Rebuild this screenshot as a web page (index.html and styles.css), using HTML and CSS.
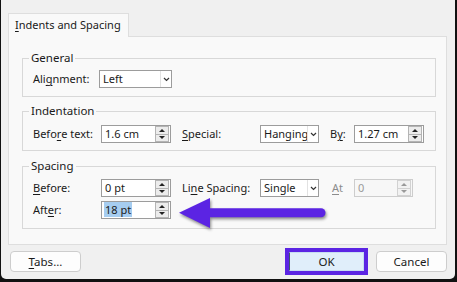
FILE: index.html
```html
<!DOCTYPE html>
<html lang="en">
<head>
    <meta charset="UTF-8">
    <meta name="viewport" content="width=device-width, initial-scale=1.0">
    <title>Paragraph</title>
    <link rel="stylesheet" href="styles.css">
</head>
<body>
    <div class="dialog">
        <div class="tabs">
            <div class="tab"><u>I</u>ndents and Spacing</div>
        </div>
        <div class="panel">
            <fieldset class="group group-general">
                <legend>General</legend>
                <div class="grid">
                    <label class="lbl">Ali<u>g</u>nment:</label>
                    <div class="select select-align">
                        <span class="val">Left</span>
                        <span class="drop"><svg width="7" height="5" viewBox="0 0 7 5"><path d="M1 1 L3.5 3.5 L6 1" fill="none" stroke="#333" stroke-width="1.2"/></svg></span>
                    </div>
                </div>
            </fieldset>

            <fieldset class="group group-indent">
                <legend>Indentation</legend>
                <div class="grid">
                    <label class="lbl">Befo<u>r</u>e text:</label>
                    <div class="spin">
                        <span class="val">1.6 cm</span>
                        <span class="spinbtns"><span class="sb"><i class="up"></i></span><span class="sb"><i class="down"></i></span></span>
                    </div>
                    <label class="lbl"><u>S</u>pecial:</label>
                    <div class="select">
                        <span class="val">Hanging</span>
                        <span class="drop"><svg width="7" height="5" viewBox="0 0 7 5"><path d="M1 1 L3.5 3.5 L6 1" fill="none" stroke="#333" stroke-width="1.2"/></svg></span>
                    </div>
                    <label class="lbl">B<u>y</u>:</label>
                    <div class="spin">
                        <span class="val">1.27 cm</span>
                        <span class="spinbtns"><span class="sb"><i class="up"></i></span><span class="sb"><i class="down"></i></span></span>
                    </div>
                </div>
            </fieldset>

            <fieldset class="group group-spacing">
                <legend>Spacing</legend>
                <div class="grid">
                    <label class="lbl"><u>B</u>efore:</label>
                    <div class="spin">
                        <span class="val">0 pt</span>
                        <span class="spinbtns"><span class="sb"><i class="up"></i></span><span class="sb"><i class="down"></i></span></span>
                    </div>
                    <label class="lbl">Li<u>n</u>e Spacing:</label>
                    <div class="select">
                        <span class="val">Single</span>
                        <span class="drop"><svg width="7" height="5" viewBox="0 0 7 5"><path d="M1 1 L3.5 3.5 L6 1" fill="none" stroke="#333" stroke-width="1.2"/></svg></span>
                    </div>
                    <label class="lbl lbl-disabled"><u>A</u>t</label>
                    <div class="spin spin-disabled">
                        <span class="val">0</span>
                        <span class="spinbtns"><span class="sb"><i class="up"></i></span><span class="sb"><i class="down"></i></span></span>
                    </div>

                    <label class="lbl">Aft<u>e</u>r:</label>
                    <div class="spin">
                        <span class="val"><span class="selected">18 pt</span></span>
                        <span class="spinbtns"><span class="sb"><i class="up"></i></span><span class="sb"><i class="down"></i></span></span>
                    </div>
                </div>
            </fieldset>
        </div>

        <div class="footer">
            <button class="btn"><u>T</u>abs...</button>
            <div class="ok-wrap">
                <button class="btn btn-ok">OK</button>
            </div>
            <button class="btn">Cancel</button>
        </div>
    </div>

    <!-- callout arrow pointing at the After field -->
    <svg class="callout" width="457" height="282" viewBox="0 0 457 282">
        <line x1="206" y1="212.8" x2="321" y2="212.8" stroke="#5b24e3" stroke-width="9" stroke-linecap="round"/>
        <polygon points="179,212.8 210,198 210,228" fill="#5b24e3"/>
    </svg>
</body>
</html>
```

FILE: styles.css
```css
body {
    margin: 0;
    width: 457px;
    height: 282px;
    background-color: #111;
    font-family: "Noto Sans", "Open Sans", sans-serif;
    font-size: 11px;
    color: #1a1a1a;
    position: relative;
    overflow: hidden;
}
u {
    text-decoration-thickness: 1px;
    text-underline-offset: 2px;
}
.dialog {
    box-sizing: border-box;
    margin: 0 2px 0 1px;
    height: 279px;
    padding: 13px 8px 0 7px;
    background-color: #f0f0f0;
    border-radius: 0 0 5px 5px;
}
.tabs {
    display: flex;
    height: 24px;
}
.tab {
    position: relative;
    z-index: 1;
    box-sizing: border-box;
    width: 121px;
    height: 24px;
    padding: 0 6px;
    line-height: 22px;
    white-space: nowrap;
    background-color: #f9f9f9;
    border: 1px solid #dedede;
    border-bottom: none;
    font-size: 11px;
}
.panel {
    box-sizing: border-box;
    width: 439px;
    height: 209px;
    margin-top: -1px;
    padding: 14px 10px 0 13px;
    background-color: #f9f9f9;
    border: 1px solid #dedede;
}
.group {
    margin: 0;
    padding: 5px 0 8px 10px;
    border: 1px solid #d8d8d8;
    min-width: 0;
}
.group legend {
    margin-left: -4px;
    padding: 0 2px;
    line-height: 14px;
    font-size: 11.5px;
}
.group-indent {
    margin-top: 7px;
    padding-top: 7px;
    padding-bottom: 7px;
}
.group-spacing {
    margin-top: 8px;
    padding-top: 6px;
    padding-bottom: 9px;
}
.grid {
    display: grid;
    grid-template-columns: 68px 81px 78px 70px 24px 70px;
    grid-auto-rows: 18px;
    row-gap: 4px;
    align-items: center;
}
.lbl {
    white-space: nowrap;
    line-height: 18px;
}
.lbl-disabled {
    color: #8c8c8c;
    padding-left: 2px;
}
.select {
    box-sizing: border-box;
    display: flex;
    width: 59px;
    height: 18px;
    background-color: #fff;
    border: 1px solid #9c9c9c;
}
.select-align {
    width: 73px;
    margin-left: -2px;
}
.select .val {
    flex: 1;
    padding-left: 3px;
    line-height: 16px;
    white-space: nowrap;
    overflow: hidden;
}
.drop {
    width: 10px;
    display: flex;
    align-items: center;
    justify-content: center;
    border-left: 1px solid #e2e2e2;
}
.spin {
    box-sizing: border-box;
    display: flex;
    width: 70px;
    height: 18px;
    background-color: #fff;
    border: 1px solid #9c9c9c;
}
.spin .val {
    flex: 1;
    padding-left: 3px;
    line-height: 16px;
    white-space: nowrap;
}
.selected {
    background-color: #a6cdf0;
    padding: 0 1px;
    margin-left: -1px;
}
.spinbtns {
    box-sizing: border-box;
    width: 14px;
    margin: 0 1px 0 0;
    display: flex;
    flex-direction: column;
    border: 1px solid #b4b4b4;
    background-color: #ececec;
}
.sb {
    flex: 1;
    display: flex;
    align-items: center;
    justify-content: center;
}
.sb + .sb {
    border-top: 1px solid #b4b4b4;
}
.up {
    width: 0;
    height: 0;
    border-left: 3px solid transparent;
    border-right: 3px solid transparent;
    border-bottom: 3px solid #222;
}
.down {
    width: 0;
    height: 0;
    border-left: 3px solid transparent;
    border-right: 3px solid transparent;
    border-top: 3px solid #222;
}
.spin-disabled {
    width: 59px;
    border-color: #cdcdcd;
    background-color: #f7f7f7;
    color: #9a9a9a;
}
.spin-disabled .spinbtns {
    border-color: #d2d2d2;
    background-color: #f2f2f2;
}
.spin-disabled .sb + .sb {
    border-top-color: #d2d2d2;
}
.spin-disabled .up {
    border-bottom-color: #9a9a9a;
}
.spin-disabled .down {
    border-top-color: #9a9a9a;
}
.footer {
    display: flex;
    align-items: center;
    margin-top: 3px;
    padding-left: 2px;
    height: 27px;
}
.btn {
    box-sizing: border-box;
    width: 71px;
    height: 21px;
    padding: 0;
    font-family: inherit;
    font-size: 11.5px;
    color: #1a1a1a;
    background-color: #fdfdfd;
    border: 1px solid #cdcdcd;
    border-radius: 4px;
}
.ok-wrap {
    margin-left: auto;
    margin-right: 8px;
    border: 4px solid #5b24e3;
    display: flex;
}
.btn-ok {
    width: 75px;
    height: 19px;
    border-radius: 0;
    background-color: #e0eefa;
    border: 1px solid #c6dcf1;
    border-left: 1px solid #3d5570;
}
.callout {
    position: absolute;
    top: 0;
    left: 0;
    pointer-events: none;
    filter: drop-shadow(1px 2px 1.5px rgba(0, 0, 0, 0.45));
}
```
